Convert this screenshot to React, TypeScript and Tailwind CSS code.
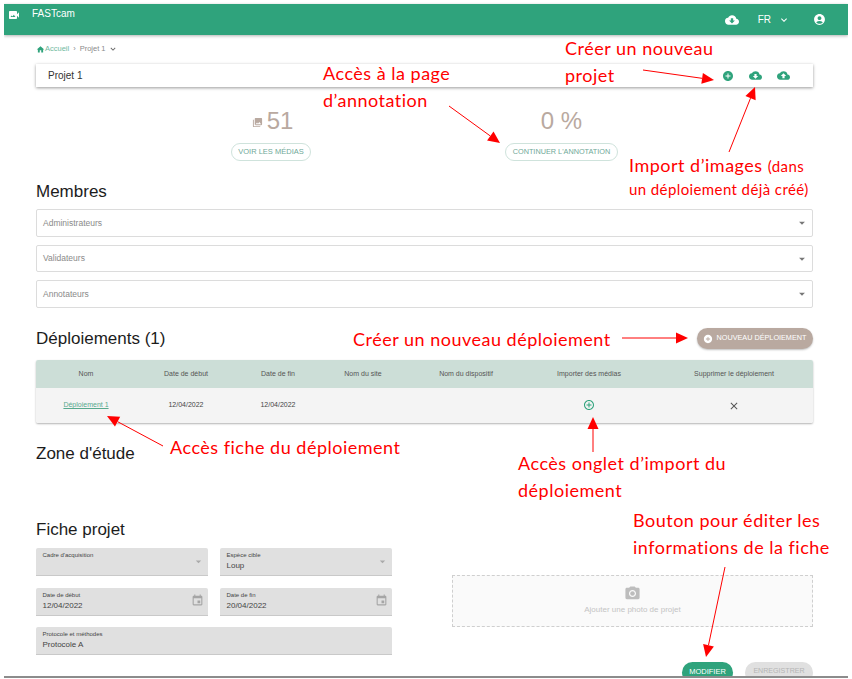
import React from "react";
import {
  MdVideoCameraBack, MdCloudDownload, MdCloudUpload, MdAccountCircle, MdAddCircle, MdExpandMore, MdHome,
  MdPhotoLibrary, MdAddCircleOutline, MdClose, MdArrowDropDown, MdEvent, MdPhotoCamera,
} from "react-icons/md";

function Arrow({ x1, y1, x2, y2 }: { x1: number; y1: number; x2: number; y2: number }) {
  const a = Math.atan2(y2 - y1, x2 - x1);
  const len = 12;
  const w = 5.5;
  const bx = x2 - Math.cos(a) * len;
  const by = y2 - Math.sin(a) * len;
  const nx = -Math.sin(a) * w;
  const ny = Math.cos(a) * w;
  return (
    <g>
      <line x1={x1} y1={y1} x2={bx} y2={by} stroke="#ff0000" strokeWidth={1} />
      <polygon points={`${x2},${y2} ${bx + nx},${by + ny} ${bx - nx},${by - ny}`} fill="#ff0000" />
    </g>
  );
}

function Annot({ className, children }: { className: string; children: React.ReactNode }) {
  return (
    <div className={`absolute whitespace-nowrap font-['Lato',sans-serif] text-[18px] leading-[27px] tracking-[0.5px] text-[#ff0000] ${className}`}>
      {children}
    </div>
  );
}

function Heading({ className = "", children }: { className?: string; children: React.ReactNode }) {
  return <h2 className={`text-[17px] leading-[20px] text-[#1c1c1c] ${className}`}>{children}</h2>;
}

function MemberSelect({ label, className = "" }: { label: string; className?: string }) {
  return (
    <div className={`flex items-center justify-between rounded-[2px] border border-[#dcdcdc] pl-[6px] pr-[3px] text-[8.5px] text-[#8a8a8a] ${className}`}>
      <span>{label}</span>
      <MdArrowDropDown className="text-[14px] text-[#777]" />
    </div>
  );
}

function Field({ label, value, icon, className = "" }: { label: string; value?: string; icon?: "drop" | "date"; className?: string }) {
  return (
    <div className={`relative h-[28px] rounded-t-[2px] border-b border-[#c9c9c9] bg-[#e0e0e0] pl-[6.5px] pt-[3px] ${className}`}>
      <div className="text-[6px] leading-[9px] text-[#444]">{label}</div>
      <div className="text-[8px] leading-[11px] text-[#444]">{value}</div>
      {icon === "drop" && <MdArrowDropDown className="absolute right-[3px] top-[7px] text-[13px] text-[#aaa]" />}
      {icon === "date" && <MdEvent className="absolute right-[4px] top-[6px] text-[13px] text-[#a5a5a5]" />}
    </div>
  );
}

const headers = ["Nom", "Date de début", "Date de fin", "Nom du site", "Nom du dispositif", "Importer des médias", "Supprimer le déploiement"];

export default function App() {
  return (
    <div className="relative h-[679px] w-[852px] overflow-hidden bg-white font-['Liberation_Sans',Arial,sans-serif]">
      <div className="mx-[4px] h-[678px] overflow-hidden border-b-2 border-[#8c8c8c] pt-[4px]">
        <header className="flex h-[31px] items-start justify-between bg-[#2fa37c] shadow-[0_1px_3px_rgba(0,0,0,0.3)]">
          <div className="flex items-center text-white">
            <MdVideoCameraBack className="ml-[4px] mt-[5px] text-[12px]" />
            <span className="ml-[12px] mt-[3px] text-[10px] leading-[14px]">FASTcam</span>
          </div>
          <div className="mr-[22px] mt-[8px] flex items-center text-white">
            <MdCloudDownload className="text-[14px]" />
            <span className="ml-[19px] text-[10px]">FR</span>
            <MdExpandMore className="ml-[7px] text-[12px]" />
            <MdAccountCircle className="ml-[23px] text-[13px]" />
          </div>
        </header>

        <main className="pl-[32px] pr-[35px]">
          <nav className="mt-[4px] flex h-[20px] items-center text-[7.5px] text-[#8b8b8b]">
            <MdHome className="text-[9px] text-[#2fa37c]" />
            <span className="text-[#6fb9a0]">Accueil</span>
            <span className="mx-[4px]">›</span>
            <span>Projet 1</span>
            <MdExpandMore className="ml-[2px] text-[10px] text-[#666]" />
          </nav>

          <div className="mt-[5px] flex h-[23px] items-center justify-between bg-white pl-[12px] pr-[23px] shadow-[0_1px_3px_rgba(0,0,0,0.4)]">
            <span className="text-[10px] text-[#333]">Projet 1</span>
            <div className="flex items-center gap-[15px] text-[#2fa37c]">
              <MdAddCircle className="text-[12px]" />
              <MdCloudDownload className="text-[13px]" />
              <MdCloudUpload className="text-[13px]" />
            </div>
          </div>

          <section className="relative h-[74px]">
            <div className="absolute left-[195px] top-[20px] flex w-[80px] flex-col items-center">
              <div className="flex h-[28px] items-center pl-[3px] text-[#b9a9a0]">
                <MdPhotoLibrary className="mr-[4px] mt-[3px] text-[11px]" />
                <span className="text-[24px] leading-[28px]">51</span>
              </div>
              <button className="mt-[8px] h-[18px] w-[80px] rounded-full border border-[#cfe3dc] text-[7.5px] text-[#6fa898]">VOIR LES MÉDIAS</button>
            </div>
            <div className="absolute left-[469px] top-[20px] flex w-[113px] flex-col items-center">
              <div className="flex h-[28px] items-center text-[24px] leading-[28px] text-[#b9a9a0]">0 %</div>
              <button className="mt-[8px] h-[18px] w-[113px] rounded-full border border-[#cfe3dc] text-[7.3px] text-[#6fa898]">CONTINUER L'ANNOTATION</button>
            </div>
          </section>

          <Heading className="mt-[21px]">Membres</Heading>
          <div className="mt-[7px] flex flex-col">
            <MemberSelect label="Administrateurs" className="h-[28px]" />
            <MemberSelect label="Validateurs" className="mt-[8px] h-[27px]" />
            <MemberSelect label="Annotateurs" className="mt-[8px] h-[28px]" />
          </div>

          <div className="mt-[20px] flex h-[21px] items-center justify-between">
            <Heading>Déploiements (1)</Heading>
            <button className="flex h-[21px] w-[116px] items-center justify-center rounded-full bg-[#b9a9a0] pr-[1px] text-[7.25px] text-white shadow-[0_1px_2px_rgba(0,0,0,0.25)]">
              <MdAddCircle className="mr-[4px] text-[10px]" />
              NOUVEAU DÉPLOIEMENT
            </button>
          </div>

          <div className="mt-[11px] overflow-hidden rounded-[2px] shadow-[0_1px_2px_rgba(0,0,0,0.3)]">
            <div className="grid h-[28px] grid-cols-[100px_100px_84px_86px_120px_126px_161px] items-center bg-[#ccded7] text-center text-[7px] text-[#555]">
              {headers.map((h, i) => (
                <div key={h} className={i === 6 ? "pl-[3px]" : ""}>{h}</div>
              ))}
            </div>
            <div className="grid h-[35px] grid-cols-[100px_100px_84px_86px_120px_126px_161px] items-center bg-[#f4f4f4] text-center text-[7px] text-[#444]">
              <div className="text-[#58a98e] underline">Déploiement 1</div>
              <div>12/04/2022</div>
              <div>12/04/2022</div>
              <div />
              <div />
              <div className="flex justify-center"><MdAddCircleOutline className="-mt-[1px] text-[12px] text-[#2fa37c]" /></div>
              <div className="flex justify-center pl-[3px]"><MdClose className="text-[12px] text-[#555]" /></div>
            </div>
          </div>

          <Heading className="mt-[21px]">Zone d'étude</Heading>
          <Heading className="mt-[56px]">Fiche projet</Heading>

          <div className="mt-[8px] flex items-start">
            <div className="grid w-[356px] grid-cols-2 gap-x-[12px] gap-y-[11.5px]">
              <Field label="Cadre d'acquisition" icon="drop" />
              <Field label="Espèce cible" value="Loup" icon="drop" />
              <Field label="Date de début" value="12/04/2022" icon="date" />
              <Field label="Date de fin" value="20/04/2022" icon="date" />
              <Field label="Protocole et méthodes" value="Protocole A" className="col-span-2" />
            </div>
            <div className="ml-[60px] flex flex-1 flex-col items-end pt-[27px]">
              <div className="flex h-[52px] w-full flex-col items-center justify-center border border-dashed border-[#cfcfcf] bg-[#fafafa]">
                <MdPhotoCamera className="-mt-[1px] text-[17px] text-[#bdbdbd]" />
                <span className="mt-[2px] text-[8px] text-[#c4c4c4]">Ajouter une photo de projet</span>
              </div>
              <div className="mt-[35px] flex gap-[12px]">
                <button className="h-[21px] w-[51px] rounded-full bg-[#2fa37c] pb-[2px] text-[7.5px] text-white">MODIFIER</button>
                <button className="h-[21px] w-[68px] rounded-full bg-[#e0e0e0] pb-[2px] text-[7.1px] text-[#b5b5b5]">ENREGISTRER</button>
              </div>
            </div>
          </div>
        </main>
      </div>

      <svg className="pointer-events-none absolute left-0 top-0" width="852" height="679">
        <Arrow x1={643} y1={70} x2={714} y2={80} />
        <Arrow x1={729} y1={152} x2={755} y2={87} />
        <Arrow x1={449} y1={106} x2={500} y2={143} />
        <Arrow x1={622} y1={338} x2={688} y2={338} />
        <Arrow x1={163} y1={446} x2={107} y2={416} />
        <Arrow x1={593} y1={452} x2={593} y2={417} />
        <Arrow x1={725} y1={567} x2={706} y2={657} />
      </svg>

      <Annot className="left-[565px] top-[35px]">Créer un nouveau</Annot>
      <Annot className="left-[565px] top-[62px]">projet</Annot>
      <Annot className="left-[323px] top-[60px]">Accès à la page</Annot>
      <Annot className="left-[323px] top-[87px]">d’annotation</Annot>
      <Annot className="left-[629px] top-[152px]">Import d’images <span className="text-[15px] tracking-[0.4px]">(dans</span></Annot>
      <Annot className="left-[629px] top-[175px]"><span className="text-[15px] tracking-[0.4px]">un déploiement déjà créé)</span></Annot>
      <Annot className="left-[353px] top-[326px]">Créer un nouveau déploiement</Annot>
      <Annot className="left-[170px] top-[434px]">Accès fiche du déploiement</Annot>
      <Annot className="left-[518px] top-[450px]">Accès onglet d’import du</Annot>
      <Annot className="left-[518px] top-[477px]">déploiement</Annot>
      <Annot className="left-[633px] top-[507px]">Bouton pour éditer les</Annot>
      <Annot className="left-[633px] top-[534px]">informations de la fiche</Annot>
    </div>
  );
}
